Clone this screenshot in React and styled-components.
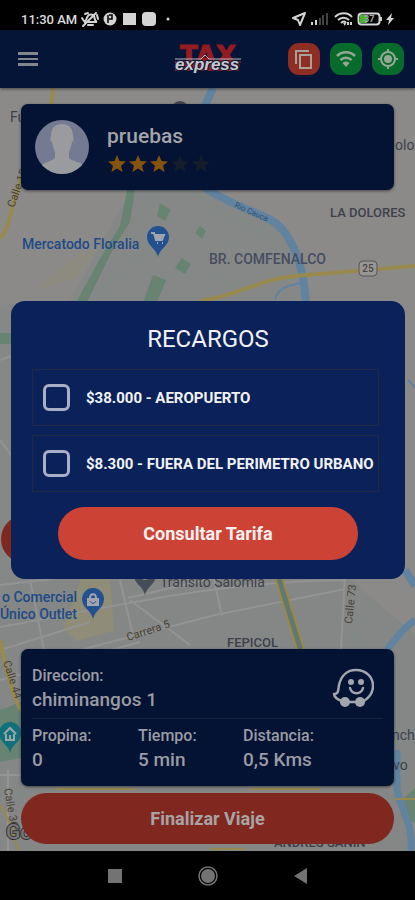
import { useState } from 'react';
import styled, { createGlobalStyle } from 'styled-components';

const GlobalStyle = createGlobalStyle`
  * {
    box-sizing: border-box;
  }

  body {
    margin: 0;
    background: #000;
    font-family: Roboto, 'Liberation Sans', sans-serif;
  }

  button {
    font-family: inherit;
    cursor: pointer;
  }

  h1, h2, p, dl, dd {
    margin: 0;
  }
`;

const Screen = styled.div`
  position: relative;
  display: flex;
  flex-direction: column;
  min-height: 100vh;
`;

const StatusBar = styled.div`
  display: flex;
  align-items: center;
  justify-content: space-between;
  height: 30px;
  padding: 8px 20px 0 21px;
  background: #000;
  color: #dcdcdc;
  font-size: 13px;
  font-weight: 500;
`;

const StatusGroup = styled.div`
  display: flex;
  align-items: center;
  gap: 2px;
`;

const Header = styled.header`
  display: grid;
  grid-template-columns: 1fr auto 1fr;
  align-items: center;
  height: 58px;
  padding: 0 11px 0 12px;
  background: #051538;
  box-shadow: 0 1px 3px rgba(0, 0, 0, 0.5);
  z-index: 1;
`;

const MenuButton = styled.button`
  display: flex;
  justify-self: start;
  padding: 6px;
  border: none;
  background: none;
`;

const LogoImage = styled.svg`
  overflow: visible;
`;

const HeaderActions = styled.div`
  display: flex;
  justify-self: end;
  gap: 10px;
`;

const ActionButton = styled.button`
  display: flex;
  width: 32px;
  height: 32px;
  padding: 4px;
  border: none;
  border-radius: 11px;
  background: ${({ $color }) => $color};
`;

const Stage = styled.main`
  position: relative;
  display: flex;
  flex: 1;
  flex-direction: column;
  padding: 16px 21px 7px;
  background: #8b8988;
`;

const MapCanvas = styled.svg`
  position: absolute;
  inset: 0;
  width: 100%;
  height: 100%;
`;

const Card = styled.section`
  position: relative;
  border-radius: 7px;
  background: #041334;
  box-shadow: 0 1px 3px rgba(0, 0, 0, 0.5);
  color: #9a9ba3;
`;

const PassengerCard = styled(Card)`
  display: flex;
  align-items: center;
  gap: 18px;
  height: 86px;
  padding: 0 14px;
`;

const PassengerName = styled.h2`
  color: #a3a4a9;
  font-size: 21px;
  font-weight: 500;
  line-height: 28px;
`;

const Stars = styled.div`
  display: flex;
  gap: 1px;
  margin-top: 5px;
`;

const SideButton = styled.button`
  position: relative;
  width: 48px;
  height: 48px;
  margin: auto 0 86px -20px;
  border: none;
  border-radius: 50%;
  background: #7e2820;
`;

const TripCard = styled(Card)`
  padding: 15px 11px 14px;
`;

const AddressRow = styled.div`
  display: flex;
  align-items: center;
  justify-content: space-between;
  padding: 0 9px 6px 0;
  border-bottom: 1px solid #14233f;
`;

const Label = styled.dt`
  font-size: 16px;
  font-weight: 500;
  line-height: 24px;
`;

const Value = styled.dd`
  font-size: 19px;
  font-weight: 500;
  line-height: 24px;
`;

const TripStats = styled.dl`
  display: grid;
  grid-template-columns: 106px 105px 1fr;
  padding-top: 5px;
`;

const PillButton = styled.button`
  position: relative;
  border: none;
  border-radius: 27px;
  font-size: 18px;
  font-weight: 700;
`;

const FinishButton = styled(PillButton)`
  height: 51px;
  margin-top: 7px;
  background: #802820;
  color: #a8a3a5;
`;

const Overlay = styled.div`
  position: absolute;
  inset: 0;
  z-index: 2;
  display: flex;
  align-items: center;
  padding: 0 10px 20px 11px;
`;

const Dialog = styled.form`
  display: flex;
  flex: 1;
  flex-direction: column;
  min-width: 0;
  padding: 22px 21px 19px;
  border-radius: 14px;
  background: #0a2259;
  color: #f1f2f6;
`;

const DialogTitle = styled.h1`
  font-size: 24px;
  font-weight: 400;
  line-height: 32px;
  text-align: center;
`;

const Options = styled.div`
  display: flex;
  flex-direction: column;
  gap: 9px;
  margin: 14px 5px 15px 0;
`;

const Option = styled.label`
  display: flex;
  align-items: center;
  gap: 16px;
  height: 57px;
  padding-left: 10px;
  border: 1px solid #222845;
  font-size: 15px;
  font-weight: 700;
  white-space: nowrap;
`;

const CheckBox = styled.input`
  flex: none;
  width: 27px;
  height: 27px;
  margin: 0;
  border: 3px solid #a9afc6;
  border-radius: 6px;
  appearance: none;

  &:checked {
    background: #cc4335;
  }
`;

const ConsultButton = styled(PillButton)`
  height: 53px;
  margin: 0 26px;
  background: #cc4335;
  color: #f8f1f1;
`;

const NavBar = styled.nav`
  display: flex;
  justify-content: center;
  height: 49px;
  background: #000;
`;

const NavButton = styled.button`
  display: flex;
  align-items: center;
  justify-content: center;
  width: 93px;
  border: none;
  background: none;
`;

const surcharges = [
  { id: 'airport', text: '$38.000 - AEROPUERTO' },
  { id: 'outside', text: '$8.300 - FUERA DEL PERIMETRO URBANO' },
];

const Logo = () => (
  <LogoImage width="68" height="30" viewBox="0 0 68 30">
    <path d="M1 17h66l-3 10H1z" fill="#931b21" />
    <text
      x="34"
      y="21"
      textAnchor="middle"
      fill="#931b21"
      stroke="#931b21"
      strokeWidth="1"
      fontFamily="DejaVu Sans, sans-serif"
      fontWeight="700"
      fontSize="26"
    >
      TAX
    </text>
    <path d="M1 15h26l4-4 4 4h32" fill="none" stroke="#b6b6bd" strokeWidth="1" />
    <text
      x="1"
      y="26"
      fill="#c8c8ce"
      stroke="#101a38"
      strokeWidth="2"
      paintOrder="stroke"
      fontFamily="Liberation Sans, sans-serif"
      fontStyle="italic"
      fontWeight="700"
      fontSize="17"
    >
      express
    </text>
  </LogoImage>
);

const Star = ({ on }) => (
  <svg width="20" height="18" viewBox="0 0 20 18">
    <path
      d="M10 0l2.500 6 6.500.5-5 4.300L15.600 17 10 13.500 4.400 17 6 10.800 1 6.500 7.500 6z"
      fill={on ? '#85530b' : '#151c2b'}
    />
  </svg>
);

const Avatar = () => (
  <svg width="54" height="54" viewBox="0 0 54 54">
    <clipPath id="avatar">
      <circle cx="27" cy="27" r="27" />
    </clipPath>
    <g clipPath="url(#avatar)">
      <path d="M0 0h54v54H0z" fill="#737a91" />
      <path
        d="M27 4c8 0 11 5 11 12 1 2 1 5-1 6-1 5-2 8-3 10v6c3 4 13 3 16 10v9H5v-9c3-7 12-6 15-10v-6c-1-2-2-5-3-10-2-1-2-4-1-6 0-7 3-12 11-12z"
        fill="#999b9e"
      />
    </g>
  </svg>
);

const Waze = () => (
  <svg width="42" height="40" viewBox="0 0 42 40" fill="none" stroke="#a3a5ae" strokeWidth="2.500" strokeLinecap="round" strokeLinejoin="round">
    <path d="M10 33C6 32 2 29 2 26c5 0 4-4 5-9C9 8 15 2 24 2c10 0 17 7 17 16 0 6-3 11-9 15M15 34h12" />
    <path d="M18 20c2 7 11 7 13 0" />
    <g fill="#a3a5ae" stroke="none">
      <circle cx="19" cy="14" r="3" />
      <circle cx="29" cy="14" r="3" />
      <circle cx="13" cy="34" r="5" />
      <circle cx="28" cy="34" r="5" />
    </g>
  </svg>
);

const StatusLeft = () => (
  <svg width="94" height="18" viewBox="79 10 94 18" fill="#d4d4d4">
    <path
      d="M84 22c3-1 2-4 4-6 1-2 5-2 6 0 1 2 0 5 3 6zM88 25h5M83 26l13-13M82 18l2 3M97 15l1 4M85 14l3-1"
      fill="none"
      stroke="#d4d4d4"
      strokeWidth="2"
      strokeLinecap="round"
    />
    <circle cx="110" cy="19" r="6.500" />
    <path d="M108 15v8M109 15h3v4h-3" fill="none" stroke="#000" strokeWidth="1.500" />
    <path d="M123 13h13v12h-13z" />
    <rect x="142" y="12" width="14" height="14" rx="4" />
    <circle cx="168" cy="19" r="1.500" />
  </svg>
);

const StatusRight = () => (
  <svg width="104" height="18" viewBox="291 10 104 18" fill="#d4d4d4">
    <path d="M305 13l-5 12-2-5-5-2z" fill="none" stroke="#d4d4d4" strokeWidth="2" strokeLinejoin="round" />
    <path d="M311 22h2v3h-2zM315 20h2v5h-2z" />
    <path d="M319 18h2v7h-2zM322 15h2v10h-2zM326 13h2v12h-2z" fill="#444" />
    <g fill="none" stroke="#d4d4d4" strokeWidth="2">
      <path d="M335 17c5-5 13-5 17 0M338 20c3-3 8-3 11 0M341 23c2-2 4-2 5 0" />
      <rect x="358.500" y="13.500" width="21" height="11" rx="3" />
    </g>
    <path d="M343 23h3l-1 3zM347 22h2v3h-2zM350 22h2v3h-2zM380 17h2v4h-2z" />
    <path d="M360 15h7v8h-7z" fill="#45b42a" />
    <text x="364" y="22" fontSize="9" fontWeight="700" fill="#aaa">37</text>
    <path d="M392 13l-6 7h3l-1 5 6-7h-3z" />
  </svg>
);

const Pin = ({ x, y, color, children }) => (
  <g transform={`translate(${x} ${y})`}>
    <path d="M0 19C-2 10-11 8-11-1a11 11 0 0 1 22 0C11 8 2 10 0 19z" fill={color} />
    {children}
  </g>
);

function CityMap() {
  return (
    <MapCanvas viewBox="0 88 415 763" preserveAspectRatio="xMidYMid slice" aria-hidden="true">
      <path d="M0 88h415v763H0z" fill="#8c8a88" />
      <path d="M132 188h70l85 45 18 67v280l-30 271H0V305l70-5z" fill="#868887" />
      <path d="M0 575h345l70 60v216H0z" fill="#858686" />
      <path d="M38 288l40-34 20-4-24 29-33 10z" fill="#8d8a7f" />
      <path d="M63 628l18-50 29-3 4 56-38 10z" fill="#8f8c78" />

      <g fill="#688371">
        <path d="M127 190h8l-5 32-15 23-32 65H72l26-48 22-36z" />
        <path d="M160 203l11 7-6 11-8-5zM182 258l9 6-6 10-10-6zM153 275l13 5-10 25h-14zM200 226l6 5-4 8-7-6z" />
        <path d="M0 710l21-8v56L0 762zM0 333h12v11H0zM400 802l15-14v35l-14-7z" />
      </g>

      <g fill="none" stroke="#929392" strokeWidth="2">
        <path d="M120 580l14 60M128 598l160-38M0 627c90-15 210-46 345-47M80 650l135-35 130-26M0 585l120-14M0 680l140-38M210 560l12 56M345 575l-4 74M0 775h21M8 770v81M0 650l90-28M0 360l11-4M0 440l11 15M30 580l14 70M130 600l60 45" />
      </g>
      <g fill="none" stroke="#7b8d81" strokeWidth="1">
        <path d="M205 202l42 20 33 30M188 190l20 10M120 240l32-47M90 297l65-50M210 270l25 18M222 290l20-11M225 245l10-5M205 230l8-6M350 620l6 30M370 600l4 8" />
      </g>

      <g fill="none" stroke="#6183a0">
        <path d="M213 88l-9 20M205 188c25 16 48 23 66 32 22 13 33 48 35 83M405 570l10 16" strokeWidth="8" />
        <path d="M415 620c-12 8-20 20-28 30M397 750v40c4 20 16 32 14 61" strokeWidth="7" />
        <path d="M275 300c3-14 15-14 25-17M408 380l7 8" strokeWidth="2" />
      </g>

      <g fill="none" stroke="#988a4f" strokeWidth="4">
        <path d="M53 88c-1 34-16 55-29 84S12 225 0 238M200 301c38-5 60-22 95-25l120-10" />
        <path d="M0 640c7 35 14 58 21 70" />
        <path d="M279 579l22 72" strokeWidth="9" />
        <path d="M0 805c10 15 14 28 18 46M55 789h80M250 789h70M395 799h20M210 849h35" strokeWidth="2" />
      </g>
      <path d="M279 579l22 72" fill="none" stroke="#64786c" strokeWidth="5" />

      <g fill="#3c414b" fontSize="14">
        <text x="10" y="122">Fu</text>
        <text x="395" y="150">olo</text>
        <text x="330" y="217" fontSize="13" fontWeight="500">LA DOLORES</text>
        <text x="209" y="264" fontWeight="500" fill="#464c61">BR. COMFENALCO</text>
        <text x="160" y="587">Transito Salomia</text>
        <text x="227" y="647" fontSize="13" fontWeight="500">FEPICOL</text>
        <text x="392" y="740">nch</text>
        <text x="393" y="770">vo</text>
        <text x="274" y="847" fontSize="13" fontWeight="500">ANDRES SANIN</text>
      </g>
      <g fill="#204a87" fontSize="14" fontWeight="500">
        <text x="22" y="249">Mercatodo Floralia</text>
        <text x="77" y="602" textAnchor="end">o Comercial</text>
        <text x="77" y="619" textAnchor="end">Único Outlet</text>
      </g>
      <g fill="#494235" fontSize="11">
        <text transform="translate(14 208) rotate(-70)">Calle 15</text>
        <text transform="translate(128 641) rotate(-18)">Carrera 5</text>
        <text transform="translate(352 624) rotate(-84)">Calle 73</text>
        <text transform="translate(3 662) rotate(72)">Calle 44</text>
        <text transform="translate(4 789) rotate(80)">Calle 36</text>
        <text transform="translate(234 207) rotate(24)" fill="#315272" fontSize="8">Rio Cauca</text>
      </g>

      <rect x="359" y="261" width="18" height="15" rx="4" fill="#979694" stroke="#555" />
      <text x="368" y="272" fontSize="10" fontWeight="500" textAnchor="middle" fill="#444">25</text>

      <circle cx="180" cy="110" r="9" fill="#42464c" />
      <Pin x={158} y={238} color="#23508f">
        <path d="M-4-3h9l-2 5h-5z" fill="#a2a5ad" />
        <path d="M-7-5h3l2 7h6l2-5H-3M-1 5h1M4 5h1" fill="none" stroke="#a2a5ad" strokeWidth="2" />
      </Pin>
      <Pin x={93} y={600} color="#23508f">
        <path d="M-6-2H6v8H-6z" fill="#a2a5ad" />
        <path d="M-3-2c0-5 6-5 6 0" fill="none" stroke="#a2a5ad" strokeWidth="2" />
        <path d="M-3 1c1 3 5 3 6 0" fill="none" stroke="#23508f" />
      </Pin>
      <Pin x={145} y={576} color="#454d58">
        <circle r="4" fill="#8b8b8b" />
      </Pin>
      <Pin x={10} y={734} color="#10717d">
        <path d="M-6 0l6-6 6 6M-4 0v6h8V0M0 1v5" fill="none" stroke="#9ba5a7" strokeWidth="2" />
      </Pin>
      <text x="6" y="839" fontSize="21" fontWeight="500" fill="#777" stroke="#333" strokeWidth="2" paintOrder="stroke">
        Google
      </text>
    </MapCanvas>
  );
}

function App() {
  const [selected, setSelected] = useState({});

  function toggle(id) {
    setSelected({ ...selected, [id]: !selected[id] });
  }

  return (
    <Screen>
      <GlobalStyle />
      <StatusBar>
        <StatusGroup>
          <span>11:30 AM</span>
          <StatusLeft />
        </StatusGroup>
        <StatusRight />
      </StatusBar>

      <Header>
        <MenuButton type="button" aria-label="Menu">
          <svg width="20" height="16" viewBox="0 0 20 16" fill="#85858d">
            <path d="M0 1h20v3H0zM0 7h20v2H0zM0 12h20v3H0z" />
          </svg>
        </MenuButton>
        <Logo />
        <HeaderActions>
          <ActionButton type="button" aria-label="Copiar" $color="#8e2d22">
            <svg width="24" height="24" viewBox="0 0 24 24" fill="none" stroke="#aaa19b" strokeWidth="2">
              <path d="M4 17V4h13M8 8h11v13H8z" />
            </svg>
          </ActionButton>
          <ActionButton type="button" aria-label="Wifi" $color="#076b2c">
            <svg width="24" height="24" viewBox="0 0 24 24" fill="none" stroke="#94a794" strokeWidth="2.500">
              <path d="M3 9c5-5 13-5 18 0M6.500 13c3-3 8-3 11 0" />
              <path d="M8.500 16c2-2 5-2 7 0L12 20z" fill="#94a794" stroke="none" />
            </svg>
          </ActionButton>
          <ActionButton type="button" aria-label="Mi ubicacion" $color="#076b2c">
            <svg width="24" height="24" viewBox="0 0 24 24" fill="none" stroke="#94a794" strokeWidth="2">
              <circle cx="12" cy="12" r="7" />
              <circle cx="12" cy="12" r="4" fill="#94a794" stroke="none" />
              <path d="M12 2v3M12 19v3M2 12h3M19 12h3" />
            </svg>
          </ActionButton>
        </HeaderActions>
      </Header>

      <Stage>
        <CityMap />
        <PassengerCard>
          <Avatar />
          <div>
            <PassengerName>pruebas</PassengerName>
            <Stars>
              {[1, 2, 3, 4, 5].map((n) => (
                <Star key={n} on={n <= 3} />
              ))}
            </Stars>
          </div>
        </PassengerCard>

        <SideButton type="button" aria-label="Recargos" />

        <TripCard>
          <AddressRow>
            <dl>
              <Label>Direccion:</Label>
              <Value>chiminangos 1</Value>
            </dl>
            <Waze />
          </AddressRow>
          <TripStats>
            <div>
              <Label>Propina:</Label>
              <Value>0</Value>
            </div>
            <div>
              <Label>Tiempo:</Label>
              <Value>5 min</Value>
            </div>
            <div>
              <Label>Distancia:</Label>
              <Value>0,5 Kms</Value>
            </div>
          </TripStats>
        </TripCard>
        <FinishButton type="button">Finalizar Viaje</FinishButton>
      </Stage>

      <NavBar>
        <NavButton type="button" aria-label="Recientes">
          <svg width="14" height="14" viewBox="0 0 14 14">
            <path d="M0 0h14v14H0z" fill="#737373" />
          </svg>
        </NavButton>
        <NavButton type="button" aria-label="Inicio">
          <svg width="20" height="20" viewBox="0 0 20 20">
            <circle cx="10" cy="10" r="9" fill="none" stroke="#737373" strokeWidth="1.500" />
            <circle cx="10" cy="10" r="7" fill="#737373" />
          </svg>
        </NavButton>
        <NavButton type="button" aria-label="Atras">
          <svg width="14" height="16" viewBox="0 0 14 16">
            <path d="M13 0v16L0 8z" fill="#737373" />
          </svg>
        </NavButton>
      </NavBar>

      <Overlay>
        <Dialog onSubmit={(event) => event.preventDefault()}>
          <DialogTitle>RECARGOS</DialogTitle>
          <Options>
            {surcharges.map(({ id, text }) => (
              <Option key={id} htmlFor={id}>
                <CheckBox
                  id={id}
                  type="checkbox"
                  checked={!!selected[id]}
                  onChange={() => toggle(id)}
                />
                {text}
              </Option>
            ))}
          </Options>
          <ConsultButton type="submit">Consultar Tarifa</ConsultButton>
        </Dialog>
      </Overlay>
    </Screen>
  );
}

export default App;
